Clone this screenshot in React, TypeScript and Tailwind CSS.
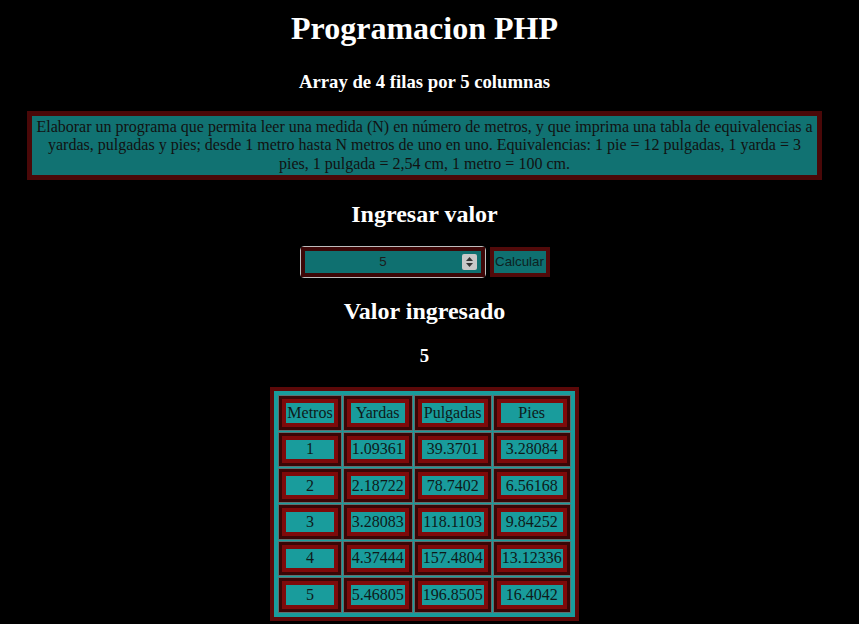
import React from "react";

const rows: string[][] = [
  ["1", "1.09361", "39.3701", "3.28084"],
  ["2", "2.18722", "78.7402", "6.56168"],
  ["3", "3.28083", "118.1103", "9.84252"],
  ["4", "4.37444", "157.4804", "13.12336"],
  ["5", "5.46805", "196.8505", "16.4042"],
];

function Cell({ children }: { children: React.ReactNode }) {
  return (
    <td className="p-0 align-middle border border-[#5f7070]">
      <div className="border-[3px] border-[#3a0606]">
        <div className="border-[4px] border-[#7e0a0a] px-[1px] py-[0.5px] text-center leading-[18.4px] text-[16px] text-[#0e1a1a] whitespace-nowrap">
          {children}
        </div>
      </div>
    </td>
  );
}

export default function App() {
  return (
    <div className="min-h-screen w-full bg-black">
      <div className="w-[849px] px-2 pt-[10px] pb-2 flex flex-col items-center text-white font-['Liberation_Serif','Times_New_Roman',serif]">
        <h1 className="text-[32px] leading-[37px] font-bold">Programacion PHP</h1>
        <h3 className="mt-[23.5px] text-[18.72px] leading-[21px] font-bold">
          Array de 4 filas por 5 columnas
        </h3>
        <div className="mt-[19.5px] self-stretch mx-[19px] border-[5px] border-[#4a0808] bg-[#117272] py-[2px] text-center text-[16px] leading-[18.4px] text-[#111]">
          Elaborar un programa que permita leer una medida (N) en número de metros, y que imprima una tabla de equivalencias a
          <br />
          yardas, pulgadas y pies; desde 1 metro hasta N metros de uno en uno. Equivalencias: 1 pie = 12 pulgadas, 1 yarda = 3
          <br />
          pies, 1 pulgada = 2,54 cm, 1 metro = 100 cm.
        </div>
        <h2 className="mt-[20px] text-[24px] leading-[28px] font-bold">Ingresar valor</h2>
        <div className="mt-[18px] flex items-center">
          <div className="rounded-[4px] border border-[#bdbdbd]">
            <div className="w-[184px] h-[30px] border-[4px] border-[#3d0707] bg-[#0f7070] flex items-center font-['Liberation_Sans',Arial,sans-serif] text-[13.33px] text-[#1c1c1c]">
              <div className="flex-1 text-center">5</div>
              <div className="w-[15px] h-[16px] mr-[4px] rounded-[2px] bg-[#c8c8c8] flex flex-col items-center justify-center gap-[2px]">
                <svg width="7" height="4" viewBox="0 0 7 4">
                  <path d="M0 4 L3.5 0 L7 4 Z" fill="#333" />
                </svg>
                <svg width="7" height="4" viewBox="0 0 7 4">
                  <path d="M0 0 L7 0 L3.5 4 Z" fill="#333" />
                </svg>
              </div>
            </div>
          </div>
          <button className="ml-[4px] h-[30px] w-[60px] border-[4px] border-[#520a0a] bg-[#0f7070] font-['Liberation_Sans',Arial,sans-serif] text-[13.33px] text-[#0c2222] flex items-center justify-center">
            Calcular
          </button>
        </div>
        <h2 className="mt-[19px] text-[24px] leading-[28px] font-bold">Valor ingresado</h2>
        <h3 className="mt-[20px] text-[18.72px] leading-[21px] font-bold">5</h3>
        <table className="mt-[21px] border-[4px] border-[#5c0909] bg-[#199c9c] border-separate border-spacing-[1px] p-[3px]">
          <tbody>
            <tr>
              <Cell>Metros</Cell>
              <Cell>Yardas</Cell>
              <Cell>Pulgadas</Cell>
              <Cell>Pies</Cell>
            </tr>
            {rows.map((r) => (
              <tr key={r[0]}>
                {r.map((c, i) => (
                  <Cell key={i}>{c}</Cell>
                ))}
              </tr>
            ))}
          </tbody>
        </table>
      </div>
    </div>
  );
}
